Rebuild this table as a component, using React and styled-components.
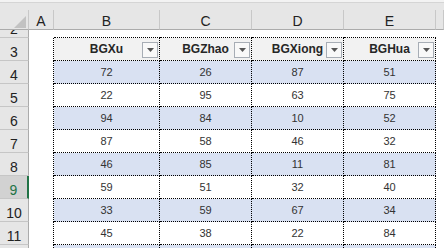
import React from "react";
import styled, { createGlobalStyle } from "styled-components";

const Global = createGlobalStyle`
  html, body { margin: 0; padding: 0; background: #fff; }
  body { font-family: "Liberation Sans", Arial, sans-serif; }
  * { box-sizing: border-box; }
`;

const COLS = "29px 25px 106px 92px 92px 92px 1fr";

const Sheet = styled.div`
  width: 444px;
  height: 248px;
  overflow: hidden;
  background: #fff;
  display: flex;
  flex-direction: column;
`;

const TopStrip = styled.div`
  height: 10px;
  flex: none;
  background: linear-gradient(#f3f3f3 0 2px, #d5d5d5 2px 3px, #e6e6e6 3px);
`;

const Row = styled.div`
  display: grid;
  grid-template-columns: ${COLS};
  height: ${(p) => p.$h}px;
  flex: none;
`;

const Corner = styled.div`
  background: #e6e6e6;
  border-right: 1px solid #c8c8c8;
  border-bottom: 1px solid #ababab;
  display: flex;
  justify-content: flex-end;
  align-items: flex-end;
  padding: 0 2px 1px 0;
`;

const ColHead = styled.div`
  background: #e6e6e6;
  border-right: 1px solid #c8c8c8;
  border-bottom: 1px solid #ababab;
  display: flex;
  justify-content: center;
  align-items: flex-end;
  font-size: 14px;
  line-height: 16px;
  color: #222;
  overflow: hidden;
`;

const RowHead = styled.div`
  background: ${(p) => (p.$sel ? "#d2d2d2" : "#e6e6e6")};
  border-right: ${(p) => (p.$sel ? "2px solid #217346" : "1px solid #ababab")};
  border-bottom: 1px solid #c6c6c6;
  color: ${(p) => (p.$sel ? "#217346" : "#222")};
  display: flex;
  justify-content: center;
  align-items: flex-end;
  font-size: 14px;
  line-height: 16px;
  overflow: hidden;
`;

const Gutter = styled.div`
  background: #fff;
  border-right: ${(p) => (p.$edge ? "1px dotted #000" : "none")};
`;

const Cell = styled.div`
  position: relative;
  border-right: ${(p) => (p.$right ? "1px dotted #000" : "none")};
  border-bottom: 1px dotted #000;
  background: ${(p) => (p.$band ? "#d9e1f2" : p.$head ? "#f2f2f2" : "#fff")};
  display: flex;
  align-items: center;
  justify-content: center;
  font-size: ${(p) => (p.$head ? 12 : 11)}px;
  font-weight: ${(p) => (p.$head ? 700 : 400)};
  color: ${(p) => (p.$head ? "#262626" : "#333")};
  overflow: hidden;
`;

const Blank = styled.div`
  background: #fff;
`;

const FilterButton = styled.span`
  position: absolute;
  right: 1px;
  bottom: 2px;
  width: 16px;
  height: 16px;
  border: 1px solid #a7adb5;
  background: #f8f8f8;
  display: flex;
  align-items: center;
  justify-content: center;
`;

const headers = ["BGXu", "BGZhao", "BGXiong", "BGHua"];
const data = [
  [72, 26, 87, 51],
  [22, 95, 63, 75],
  [94, 84, 10, 52],
  [87, 58, 46, 32],
  [46, 85, 11, 81],
  [59, 51, 32, 40],
  [33, 59, 67, 34],
  [45, 38, 22, 84],
  ["", "", "", ""],
];

const Arrow = () => (
  <svg width="7" height="4" viewBox="0 0 7 4">
    <polygon points="0,0 7,0 3.5,4" fill="#555" />
  </svg>
);

const SelectAll = () => (
  <svg width="12" height="12" viewBox="0 0 12 12">
    <polygon points="12,0 12,12 0,12" fill="#c2c2c2" />
  </svg>
);

export default function App() {
  return (
    <>
      <Global />
      <Sheet>
        <TopStrip />
        <Row $h={20}>
          <Corner>
            <SelectAll />
          </Corner>
          {["A", "B", "C", "D", "E", ""].map((l, i) => (
            <ColHead key={i}>{l}</ColHead>
          ))}
        </Row>
        <Row $h={8}>
          <RowHead>2</RowHead>
          <Gutter />
          {headers.map((h) => (
            <Cell key={h} />
          ))}
          <Blank />
        </Row>
        <Row $h={23}>
          <RowHead>3</RowHead>
          <Gutter $edge />
          {headers.map((h) => (
            <Cell key={h} $head $right>
              {h}
              <FilterButton>
                <Arrow />
              </FilterButton>
            </Cell>
          ))}
          <Blank />
        </Row>
        {data.map((r, i) => (
          <Row $h={23} key={i}>
            <RowHead $sel={i + 4 === 9}>{i + 4 < 12 ? i + 4 : ""}</RowHead>
            <Gutter $edge />
            {r.map((v, j) => (
              <Cell key={j} $right $band={i % 2 === 0}>
                {v}
              </Cell>
            ))}
            <Blank />
          </Row>
        ))}
      </Sheet>
    </>
  );
}
